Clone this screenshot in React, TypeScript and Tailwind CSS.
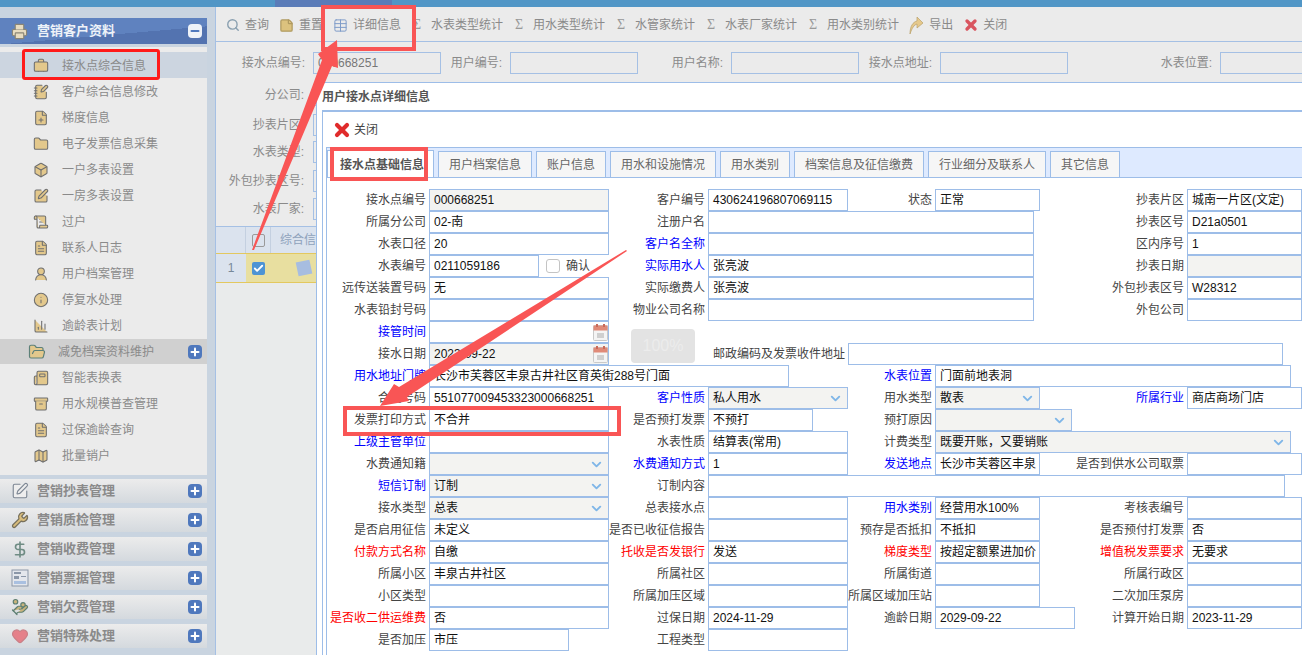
import React from "react";
import {
  Briefcase, NotebookPen, FilePlus, Folder, Box, SquarePen, ScrollText, FileText, UserRound, Info,
  ChartColumn, FolderOpen, Newspaper, Archive, Map, Printer, Wrench, DollarSign, HandCoins,
  Heart, Plus, Minus, Search, StickyNote, Table, X, ChevronDown, Check,
} from "lucide-react";

const tan = { fill: "#e3c88c", stroke: "#6f6f6f", strokeWidth: 1.6, size: 16 };

const menu1 = [
  { name: "接水点综合信息", icon: Briefcase, active: true },
  { name: "客户综合信息修改", icon: NotebookPen },
  { name: "梯度信息", icon: FilePlus },
  { name: "电子发票信息采集", icon: Folder },
  { name: "一户多表设置", icon: Box },
  { name: "一房多表设置", icon: SquarePen },
  { name: "过户", icon: ScrollText },
  { name: "联系人日志", icon: FileText },
  { name: "用户档案管理", icon: UserRound },
  { name: "停复水处理", icon: Info },
  { name: "逾龄表计划", icon: ChartColumn },
];
const menu2 = [
  { name: "智能表换表", icon: Newspaper },
  { name: "用水规模普查管理", icon: Archive },
  { name: "过保逾龄查询", icon: FileText },
  { name: "批量销户", icon: Map },
];

function BillIcon() {
  return (
    <svg width="18" height="18" viewBox="0 0 18 18">
      <rect x="1" y="1" width="16" height="16" fill="#e4e7ec" stroke="#8b97a8" />
      <rect x="3" y="3" width="7" height="2" fill="#8b97a8" />
      <rect x="3" y="7" width="5" height="3" fill="#8b97a8" />
      <rect x="10" y="7" width="5" height="1" fill="#8b97a8" />
      <rect x="3" y="12" width="12" height="3" fill="#a9c0e0" />
    </svg>
  );
}

const sections = [
  { name: "营销抄表管理", icon: <SquarePen size={18} stroke="#7d8794" fill="#eeeeee" strokeWidth={1.5} /> },
  { name: "营销质检管理", icon: <Wrench size={18} stroke="#77705c" fill="#d9bd7c" strokeWidth={1.7} /> },
  { name: "营销收费管理", icon: <DollarSign size={19} stroke="#6f8c84" strokeWidth={2.2} /> },
  { name: "营销票据管理", icon: <BillIcon /> },
  { name: "营销欠费管理", icon: <HandCoins size={18} stroke="#5d7f72" fill="#c9b47c" strokeWidth={1.6} /> },
  { name: "营销特殊处理", icon: <Heart size={18} stroke="#c97f86" fill="#e58089" strokeWidth={1.5} /> },
];
const tabs = ["用户档案信息", "账户信息", "用水和设施情况", "用水类别", "档案信息及征信缴费", "行业细分及联系人", "其它信息"];
const stats = ["水表类型统计", "用水类型统计", "水管家统计", "水表厂家统计", "用水类别统计"];

function PlusBox({ minus }: { minus?: boolean }) {
  return (
    <span className={`flex h-[14px] w-[14px] items-center justify-center rounded-[4px] ${minus ? "bg-[#eef2f8]" : "bg-[#4f78bd]"}`}>
      {minus ? <Minus size={12} strokeWidth={4} color="#4f78bd" /> : <Plus size={12} strokeWidth={4} color="#ffffff" />}
    </span>
  );
}

function Calendar() {
  return (
    <svg width="15" height="17" viewBox="0 0 15 17" className="shrink-0">
      <rect x="0.5" y="1.5" width="14" height="15" rx="1" fill="#f4f4f4" stroke="#c9c9c9" />
      <rect x="0.5" y="1.5" width="14" height="5" fill="#e08a78" />
      <rect x="3" y="0" width="2" height="3" fill="#c96a5a" />
      <rect x="10" y="0" width="2" height="3" fill="#c96a5a" />
      <rect x="4" y="9" width="7" height="5" fill="#cfcfcf" />
    </svg>
  );
}

type LabelProps = { children: React.ReactNode; color?: "blue" | "red"; span?: string };

function Label({ children, color, span = "" }: LabelProps) {
  const tone = color === "blue" ? "text-[#0000ff]" : color === "red" ? "text-[#ff0000]" : "text-[#444444]";
  return <div className={`whitespace-nowrap pr-[3px] text-right leading-[22px] ${tone} ${span}`}>{children}</div>;
}

type FieldProps = {
  value?: string;
  gray?: boolean;
  select?: boolean;
  date?: boolean;
  span?: string;
  w?: string;
};

function Field({ value = "", gray, select, date, span = "", w = "w-full" }: FieldProps) {
  return (
    <div className={span}>
      <div className={`flex h-[22px] items-center justify-between overflow-hidden border border-[#9dbde8] pl-[4px] text-[#111111] ${gray || select ? "bg-[#f3f3f1]" : "bg-white"} ${w}`}>
        <span className="whitespace-nowrap">{value}</span>
        {select && <ChevronDown size={15} strokeWidth={3} color="#7fb6e8" className="mr-[4px] shrink-0" />}
        {date && <Calendar />}
      </div>
    </div>
  );
}

function Row({ children }: { children: React.ReactNode }) {
  return <div className="grid h-[22px] grid-cols-[101px_180px_99px_140px_87px_105px_147px_115px]">{children}</div>;
}

function DetailForm() {
  return (
    <div className="relative pl-px pt-[11px] text-[12px]">
      <Row>
        <Label>接水点编号</Label><Field value="000668251" gray />
        <Label>客户编号</Label><Field value="430624196807069115" />
        <Label>状态</Label><Field value="正常" />
        <Label>抄表片区</Label><Field value="城南一片区(文定)" />
      </Row>
      <Row>
        <Label>所属分公司</Label><Field value="02-南" />
        <Label>注册户名</Label><Field span="col-span-3" w="w-[326px]" />
        <Label>抄表区号</Label><Field value="D21a0501" />
      </Row>
      <Row>
        <Label>水表口径</Label><Field value="20" />
        <Label color="blue">客户名全称</Label><Field span="col-span-3" w="w-[326px]" />
        <Label>区内序号</Label><Field value="1" />
      </Row>
      <Row>
        <Label>水表编号</Label>
        <div className="flex items-center">
          <Field value="0211059186" w="w-[110px]" />
          <span className="ml-[7px] h-[14px] w-[14px] rounded-[3px] border border-[#c4c4c4] bg-white" />
          <span className="ml-[6px] text-[#444444]">确认</span>
        </div>
        <Label color="blue">实际用水人</Label><Field value="张亮波" span="col-span-3" w="w-[326px]" />
        <Label>抄表日期</Label><Field gray />
      </Row>
      <Row>
        <Label>远传送装置号码</Label><Field value="无" />
        <Label>实际缴费人</Label><Field value="张亮波" span="col-span-3" w="w-[326px]" />
        <Label>外包抄表区号</Label><Field value="W28312" />
      </Row>
      <Row>
        <Label>水表铅封号码</Label><Field />
        <Label>物业公司名称</Label><Field span="col-span-3" w="w-[326px]" />
        <Label>外包公司</Label><Field />
      </Row>
      <Row>
        <Label color="blue">接管时间</Label><Field date />
      </Row>
      <Row>
        <Label>接水日期</Label><Field value="2023-09-22" gray date />
        <Label span="col-span-2">邮政编码及发票收件地址</Label><Field span="col-span-4" w="w-[435px]" />
      </Row>
      <Row>
        <Label color="blue">用水地址门牌</Label><Field value="长沙市芙蓉区丰泉古井社区育英街288号门面" span="col-span-3" w="w-[360px]" />
        <Label color="blue">水表位置</Label><Field value="门面前地表洞" span="col-span-3" w="w-[356px]" />
      </Row>
      <Row>
        <Label>合同号码</Label><Field value="551077009453323000668251" />
        <Label color="blue">客户性质</Label><Field value="私人用水" select />
        <Label>用水类型</Label><Field value="散表" select />
        <Label color="blue">所属行业</Label><Field value="商店商场门店" />
      </Row>
      <Row>
        <Label>发票打印方式</Label><Field value="不合并" />
        <Label>是否预打发票</Label><Field value="不预打" w="w-[105px]" />
        <Label>预打原因</Label><Field select span="col-span-2" w="w-[137px]" />
      </Row>
      <Row>
        <Label color="blue">上级主管单位</Label><Field />
        <Label>水表性质</Label><Field value="结算表(常用)" />
        <Label>计费类型</Label><Field value="既要开账，又要销账" select span="col-span-3" w="w-[356px]" />
      </Row>
      <Row>
        <Label>水费通知籍</Label><Field select />
        <Label color="blue">水费通知方式</Label><Field value="1" />
        <Label color="blue">发送地点</Label><Field value="长沙市芙蓉区丰泉" />
        <Label>是否到供水公司取票</Label><Field />
      </Row>
      <Row>
        <Label color="blue">短信订制</Label><Field value="订制" select />
        <Label>订制内容</Label><Field span="col-span-5" w="w-[577px]" />
      </Row>
      <Row>
        <Label>接水类型</Label><Field value="总表" select />
        <Label>总表接水点</Label><Field />
        <Label color="blue">用水类别</Label><Field value="经营用水100%" />
        <Label>考核表编号</Label><Field />
      </Row>
      <Row>
        <Label>是否启用征信</Label><Field value="未定义" />
        <Label>是否已收征信报告</Label><Field />
        <Label>预存是否抵扣</Label><Field value="不抵扣" />
        <Label>是否预付打发票</Label><Field value="否" />
      </Row>
      <Row>
        <Label color="red">付款方式名称</Label><Field value="自缴" />
        <Label color="red">托收是否发银行</Label><Field value="发送" />
        <Label color="red">梯度类型</Label><Field value="按超定额累进加价" />
        <Label color="red">增值税发票要求</Label><Field value="无要求" />
      </Row>
      <Row>
        <Label>所属小区</Label><Field value="丰泉古井社区" />
        <Label>所属社区</Label><Field />
        <Label>所属街道</Label><Field />
        <Label>所属行政区</Label><Field />
      </Row>
      <Row>
        <Label>小区类型</Label><Field />
        <Label>所属加压区域</Label><Field />
        <Label>所属区域加压站</Label><Field />
        <Label>二次加压泵房</Label><Field />
      </Row>
      <Row>
        <Label color="red">是否收二供运维费</Label><Field value="否" />
        <Label>过保日期</Label><Field value="2024-11-29" />
        <Label>逾龄日期</Label><Field value="2029-09-22" w="w-[140px]" />
        <Label>计算开始日期</Label><Field value="2023-11-29" />
      </Row>
      <Row>
        <Label>是否加压</Label><Field value="市压" w="w-[140px]" />
        <Label>工程类型</Label><Field />
      </Row>
      {/* disabled percent button sitting over the form */}
      <div className="absolute left-[304px] top-[151px] flex h-[34px] w-[64px] items-center justify-center rounded-[4px] bg-[#e3e3e3] text-[16px] text-[#ececec]">
        100%
      </div>
    </div>
  );
}

function DetailDialog() {
  return (
    <div className="absolute bottom-0 left-[316px] right-0 top-[82px] border-l border-t border-[#9dbde8] bg-white pl-[5px]">
      <div className="flex h-[27px] items-center text-[12px] font-bold text-[#555555]">用户接水点详细信息</div>
      <div className="h-full border-l border-t-2 border-[#9dbde8]">
        <div className="flex h-[35px] items-center gap-[2px] pl-[9px] text-[12px] text-[#444444]">
          <X size={20} strokeWidth={5} color="#e02b2b" />
          关闭
        </div>
        <div className="ml-[3px] h-full border-l border-t border-[#9dbde8]">
          <div className="flex h-[30px] items-end gap-[4px] border-b border-[#9dbde8] bg-[#deeaff] text-[12px]">
            <div className="flex h-[27px] w-[107px] items-center justify-center border border-b-0 border-[#9dbde8] bg-white pl-[3px] pt-px font-bold text-[#555555]">
              接水点基础信息
            </div>
            {tabs.map((t) => (
              <div key={t} className="flex h-[26px] items-center border border-b-0 border-[#9dbde8] bg-[#f6f6f6] px-[10px] pt-px text-[#666666]">
                {t}
              </div>
            ))}
          </div>
          <DetailForm />
        </div>
      </div>
    </div>
  );
}

function Sidebar() {
  return (
    <aside className="w-[207px] shrink-0 pt-[11px]">
      <div className="flex h-[26px] items-center justify-between bg-[linear-gradient(175deg,#5f82bf_60%,#5373b0_60%)] pl-[11px] pr-[5px]">
        <div className="flex items-center gap-[9px] text-[13px] font-bold text-[#eef2f8]">
          <Printer size={17} fill="#e8dcc0" stroke="#8a8576" strokeWidth={1.6} />
          营销客户资料
        </div>
        <PlusBox minus />
      </div>
      <div className="mt-[3px] h-[428px] bg-[#ebebeb] pt-[5px] text-[12px] text-[#8a8a8a]">
        {menu1.map((m) => (
          <div key={m.name} className={`flex h-[26px] items-center gap-[13px] pl-[33px] pt-px ${m.active ? "bg-[#ccd5e0]" : ""}`}>
            <m.icon {...tan} />
            {m.name}
          </div>
        ))}
        <div className="mt-px flex h-[25px] items-center justify-between bg-[#d0d0d0] pl-[28px] pr-[5px]">
          <div className="flex items-center gap-[12px]">
            <FolderOpen size={18} fill="#e3c88c" stroke="#5d8078" strokeWidth={1.6} />
            减免档案资料维护
          </div>
          <PlusBox />
        </div>
        {menu2.map((m) => (
          <div key={m.name} className="flex h-[26px] items-center gap-[13px] pl-[33px] pt-px">
            <m.icon {...tan} />
            {m.name}
          </div>
        ))}
      </div>
      <div className="mt-[4px] flex flex-col gap-[5px]">
        {sections.map((s) => (
          <div key={s.name} className="flex h-[24px] items-center justify-between bg-linear-to-b from-[#ececec] to-[#d4d9de] pl-[11px] pr-[5px]">
            <div className="flex items-center gap-[8px] text-[13px] font-bold text-[#8a8a8a]">
              <span className="flex w-[18px] justify-center">{s.icon}</span>
              {s.name}
            </div>
            <PlusBox />
          </div>
        ))}
      </div>
    </aside>
  );
}

function ToolItem({ icon, text }: { icon: React.ReactNode; text: string }) {
  return (
    <div className="flex items-center gap-[5px]">
      {icon}
      {text}
    </div>
  );
}

function FilterCell({ label, w, value, inputW = "w-[128px]" }: { label: string; w: string; value?: string; inputW?: string }) {
  return (
    <div className="flex items-center">
      <span className={`whitespace-nowrap pr-[8px] text-right ${w}`}>{label}</span>
      <span className={`h-[22px] border border-[#a5c0e4] pl-[4px] leading-[20px] text-[#777777] ${inputW}`}>{value}</span>
    </div>
  );
}

function StubLabel({ label, mt }: { label: string; mt: string }) {
  return (
    <div className={`flex h-[22px] items-center ${mt}`}>
      <span className="w-[88px] text-right text-[12px]">{label}:</span>
      <span className="ml-[9px] h-[22px] w-[40px] border border-[#a5c0e4]" />
    </div>
  );
}

function MainPanel() {
  return (
    <main className="ml-[8px] flex min-w-0 flex-1 flex-col border-l border-[#a5c0e4] bg-[#ebebeb] text-[12px] text-[#8a8a8a]">
      <div className="flex h-[35px] items-center gap-[10px] border-b border-[#a5c0e4] pl-[10px] pt-[2px]">
        <ToolItem icon={<Search size={14} stroke="#8aa0b0" strokeWidth={2.4} />} text="查询" />
        <ToolItem icon={<StickyNote size={15} fill="#dcc27e" stroke="#b09a60" />} text="重置" />
        <ToolItem icon={<Table size={15} stroke="#7f9cc9" strokeWidth={1.6} />} text="详细信息" />
        {stats.map((s) => (
          <ToolItem key={s} icon={<span className="w-[15px] pl-[2px] font-[serif] text-[14px] leading-none text-[#999999]">Σ</span>} text={s} />
        ))}
        <ToolItem
          icon={
            <svg width="15" height="19" viewBox="0 0 15 19">
              <path d="M1 18 C1 10 4 6 8 5 V1 L14 7 L8 12 V8 C5 9 3 12 1 18Z" fill="#e6c98c" stroke="#b9a06a" strokeWidth="0.7" />
            </svg>
          }
          text="导出"
        />
        <ToolItem icon={<X size={16} strokeWidth={5} color="#d9555f" className="mr-[-1px]" />} text="关闭" />
      </div>
      <div className="flex h-[185px] flex-col border-b border-[#a5c0e4] pt-[10px]">
        <div className="flex items-center">
          <FilterCell label="接水点编号:" w="w-[97px]" value="000668251" />
          <FilterCell label="用户编号:" w="w-[69px]" />
          <FilterCell label="用户名称:" w="w-[93px]" />
          <FilterCell label="接水点地址:" w="w-[81px]" />
          <FilterCell label="水表位置:" w="w-[152px]" inputW="w-[90px]" />
        </div>
        <StubLabel label="分公司" mt="mt-[10px]" />
        <StubLabel label="抄表片区" mt="mt-[8px]" />
        <StubLabel label="水表类型" mt="mt-[5px]" />
        <StubLabel label="外包抄表区号" mt="mt-[7px]" />
        <StubLabel label="水表厂家" mt="mt-[6px]" />
      </div>
      <div className="flex h-[26px] bg-[#dbe3ee]">
        <span className="w-[30px] border-r border-[#c4d0e0]" />
        <span className="flex w-[25px] items-center justify-center border-r border-[#c4d0e0]">
          <span className="h-[13px] w-[13px] rounded-[2px] border border-[#9a9a9a]" />
        </span>
        <span className="whitespace-nowrap pl-[9px] leading-[26px] text-[#8fa2bc]">综合信息</span>
      </div>
      <div className="flex h-[30px] border-y border-[#e3c85f] bg-[#e8dfa0]">
        <span className="flex w-[30px] items-center justify-center bg-[#dbe3ee] text-[#778899]">1</span>
        <span className="flex w-[25px] items-center justify-center">
          <span className="flex h-[13px] w-[13px] items-center justify-center rounded-[2px] bg-[#4d94d4]">
            <Check size={11} strokeWidth={4} color="#ffffff" />
          </span>
        </span>
        <span className="ml-[26px] mt-[7px] h-[14px] w-[14px] rotate-[-12deg] bg-[#a7bde0]" />
      </div>
      <div className="flex-1 bg-[#e9ebeb]" />
    </main>
  );
}

export default function App() {
  return (
    <div className="relative flex h-screen w-full flex-col overflow-hidden bg-[#c9d4e0] [font-family:'Liberation_Sans','Noto_Sans_CJK_SC',sans-serif]">
      <div className="flex h-[7px] shrink-0 bg-[#5196c6]">
        <span className="ml-[275px] w-[117px] bg-[#5b7cb8]" />
      </div>
      <div className="flex min-h-0 flex-1">
        <Sidebar />
        <MainPanel />
      </div>
      <DetailDialog />

      {/* red annotations on top of the screenshot */}
      <div className="absolute left-[22px] top-[49px] h-[31px] w-[138px] rounded-[3px] border-[3px] border-[#ff1a1a]" />
      <div className="absolute left-[321px] top-[5px] h-[46px] w-[95px] border-[4px] border-[#f95555]" />
      <div className="absolute left-[330px] top-[147px] h-[34px] w-[98px] border-[4px] border-[#f95555]" />
      <div className="absolute left-[343px] top-[406px] h-[30px] w-[278px] border-[4px] border-[#f95555]" />
      <svg className="pointer-events-none absolute left-0 top-0" width="1302" height="655" viewBox="0 0 1302 655">
        <polygon points="337,40 338,68 332,66 254,250 252,250 322,60 318,54" fill="#f95555" />
        <polygon points="380,406 394,384 399,387 626,250 627,251 407,397 409,401" fill="#f95555" />
      </svg>
    </div>
  );
}
